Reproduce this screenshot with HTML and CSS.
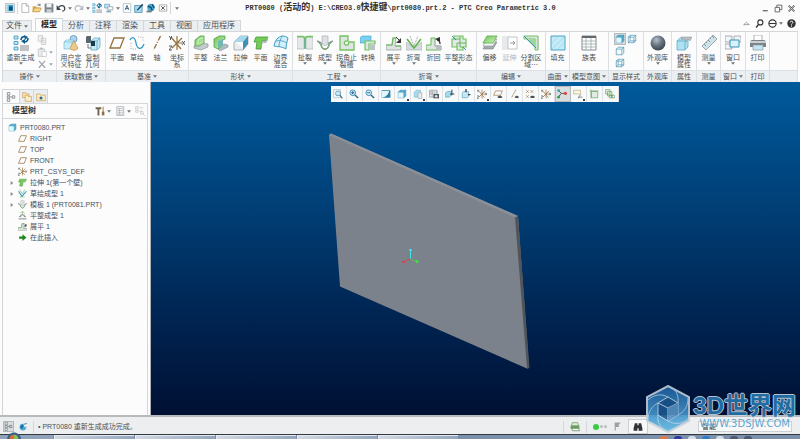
FILE: index.html
```html
<!DOCTYPE html>
<html lang="zh-CN">
<head>
<meta charset="utf-8">
<title>PRT0080 - PTC Creo Parametric 3.0</title>
<link rel="stylesheet" href="styles.css">
</head>
<body>
<svg class="defs" aria-hidden="true">
  <defs>
    <linearGradient id="gGreen" x1="0" y1="0" x2="1" y2="1"><stop offset="0" stop-color="#6cc455"/><stop offset="1" stop-color="#d4f2c4"/></linearGradient>
    <linearGradient id="gBlue" x1="0" y1="0" x2="1" y2="1"><stop offset="0" stop-color="#3f93b8"/><stop offset="1" stop-color="#d8f2fb"/></linearGradient>
    <radialGradient id="gBall" cx=".4" cy=".3" r=".7"><stop offset="0" stop-color="#b5c0cb"/><stop offset=".5" stop-color="#6b7885"/><stop offset="1" stop-color="#3c4650"/></radialGradient>
    <linearGradient id="gHex" x1="0" y1="0" x2="0" y2="1"><stop offset="0" stop-color="#1d5f9e"/><stop offset="1" stop-color="#5cb7e4"/></linearGradient>
  </defs>
  <symbol id="app" viewBox="0 0 16 16"><path d="M1 1h14v14H1z" fill="#f2f6f8" stroke="#8b969f"/><path d="M3 3h10v10H3z" fill="#2f94c6"/><path d="M6 6h6v6H6z" fill="#0b4f80"/><path d="M3 3h3v10H3z" fill="#93d0ea"/></symbol>
  <symbol id="new" viewBox="0 0 16 16"><path d="M3 1h7l4 4v10H3z" fill="#fff" stroke="#8d959b"/><path d="M10 1v4h4" fill="#dfe5e9" stroke="#8d959b"/></symbol>
  <symbol id="open" viewBox="0 0 16 16"><path d="M1 5h5l1 2h5v7H1z" fill="#d9a94c"/><path d="M1 14l3-6h11l-3 6z" fill="#f6d78d" stroke="#b98a35"/><path d="M8 4c2-3 4-3 5 0m0 0V1m0 3h-3" fill="none" stroke="#555"/></symbol>
  <symbol id="save" viewBox="0 0 16 16"><path d="M1 1h14v14H1z" fill="#7d858b"/><path d="M4 1h8v6H4z" fill="#f2f4f5"/><path d="M4 10h8v5H4z" fill="#c9ced2"/></symbol>
  <symbol id="undo" viewBox="0 0 16 16"><path d="M4 7c4-5 10-3 10 2 0 2-2 4-4 4" fill="none" stroke="#3c4247" stroke-width="2"/><path d="M1 3v8h7z" fill="#3c4247"/></symbol>
  <symbol id="redo" viewBox="0 0 16 16"><path d="M12 7C8 2 2 4 2 9c0 2 2 4 4 4" fill="none" stroke="#b8bcc0" stroke-width="2"/><path d="M15 3v8H8z" fill="#b8bcc0"/></symbol>
  <symbol id="regen" viewBox="0 0 16 16"><path d="M1 1h4v3H1zM1 6.500h4v3H1zM1 12h4v3H1z" fill="#b9e4f5" stroke="#3d97bd" stroke-width=".8"/><path d="M7 11h9M7 13h9M7 15h9" stroke="#888"/><path d="M8 5c0-3 3-4 4-3M15 3c0 4-3 4-4 4" fill="none" stroke="#0c5c8c" stroke-width="1.600"/><path d="M11 0l4 2-3 3zM12 4v5L8 6z" fill="#0c5c8c"/></symbol>
  <symbol id="copy" viewBox="0 0 16 16"><path d="M2 1h7v9H2zM7 5h7v10H7z" fill="#f3f3f3" stroke="#b5b8ba"/><path d="M9 9h4M9 12h4" stroke="#c5c8ca"/></symbol>
  <symbol id="paste" viewBox="0 0 16 16"><path d="M2 3h10v12H2z" fill="#ececec" stroke="#b5b8ba"/><path d="M5 1h4v3H5z" fill="#b5b8ba"/><path d="M8 7h7v8H8z" fill="#fff" stroke="#b5b8ba"/></symbol>
  <symbol id="del" viewBox="0 0 16 16"><path d="M3 3l10 11M13 3L3 14" stroke="#a2a6a9" stroke-width="2"/></symbol>
  <symbol id="windows" viewBox="0 0 16 16"><path d="M1 2h8v6H1z" fill="#bfe4f4" stroke="#4694b8"/><path d="M6 6h8v5H6z" fill="#fff" stroke="#7b868d"/><path d="M4 12h7v3H4z" fill="#7fa8bd"/></symbol>
  <symbol id="pick" viewBox="0 0 16 16"><path d="M2 1h12v14H2z" fill="#fff" stroke="#a0a8ae"/><path d="M5 11l3-7 3 7M6 9h4" fill="none" stroke="#2f5f80" stroke-width="1.500"/></symbol>
  <symbol id="winedit" viewBox="0 0 16 16"><path d="M1 4h12v11H1z" fill="#a6dbf0" stroke="#27759c"/><path d="M4 11L13 1l2 2-9 9z" fill="#1f4b66"/></symbol>
  <symbol id="globe" viewBox="0 0 16 16"><circle cx="8" cy="7" r="6" fill="#4aa7d3"/><path d="M3 5l5 2 2 5M10 2l3 6" stroke="#0b4468" stroke-width="2" fill="none"/><path d="M1 12h8v3H1z" fill="#6f787f"/></symbol>
  <symbol id="closewin" viewBox="0 0 16 16"><path d="M2 3h12v10H2z" fill="#fff" stroke="#888"/><path d="M5 5l6 6M11 5l-6 6" stroke="#555" stroke-width="1.500"/></symbol>
  <symbol id="udf" viewBox="0 0 16 16"><circle cx="10.500" cy="4" r="3.500" fill="#b2d5ee" stroke="#4485b3" stroke-width=".7"/><path d="M1 7l2-2h8v7l-2 2H1z" fill="#c8eefa" stroke="#6fb2ce" stroke-width=".6"/><path d="M1 7h8v7M9 7l2-2" fill="none" stroke="#6fb2ce" stroke-width=".6"/><path d="M11 6l4 7c0 3-8 3-8 0z" fill="#ecc98c" stroke="#bb8b45" stroke-width=".6"/></symbol>
  <symbol id="copygeo" viewBox="0 0 16 16"><path d="M1 2l1-1h4v7H1z" fill="#5a656d"/><path d="M6 6l3-3h6v9l-3 3H6z" fill="#c4ecf8" stroke="#5ba2bd" stroke-width=".7"/><path d="M6 6h6v9M12 6l3-3" fill="none" stroke="#5ba2bd" stroke-width=".7"/><path d="M6 6h4v5H6z" fill="#1b3a4c"/><path d="M3 9v4h3" fill="none" stroke="#777"/></symbol>
  <symbol id="plane" viewBox="0 0 16 16"><path d="M5 3h10l-4 10H1z" fill="none" stroke="#96713f" stroke-width="1.300"/></symbol>
  <symbol id="sketch" viewBox="0 0 16 16"><path d="M1 5c2-4 5-3 6 3s5 8 8 1" fill="none" stroke="#2d9ac8" stroke-width="1.300"/><path d="M2 8v6h6M9 2h5v4" fill="none" stroke="#aaa" stroke-dasharray="1 1.500"/></symbol>
  <symbol id="axis" viewBox="0 0 16 16"><path d="M11.500 1L4.500 15" stroke="#96713f" stroke-width="1.400" stroke-dasharray="5 1.500 1 1.500"/></symbol>
  <symbol id="csys" viewBox="0 0 16 16"><path d="M8 8V1M8 8v7M8 8h5M2 2l10 12M13 3L3 13" stroke="#96713f" stroke-width="1.200"/><path d="M13 6l3 4M16 6l-3 4M0 1l1.500 2L3 1M1.500 3v2M0 11h3l-3 4h3" fill="none" stroke="#454545" stroke-width=".9"/></symbol>
  <symbol id="flat" viewBox="0 0 16 16"><path d="M1 11l6-3 8 1v3l-7 3-7-2z" fill="#c5cacd" stroke="#8c9499" stroke-width=".7"/><path d="M2 11V5l5-4h4v7l-5 3z" fill="url(#gGreen)" stroke="#4ca33e" stroke-width=".8"/><path d="M5 9V5l3-2h2" fill="none" stroke="#d6f3cf"/></symbol>
  <symbol id="flange" viewBox="0 0 16 16"><path d="M4 13l7-4 4 1v2l-8 4z" fill="#b4bbc0" stroke="#858d92" stroke-width=".6"/><path d="M1 12V4l5-3h6v3l-4 2v6l-3 2z" fill="url(#gGreen)" stroke="#4ca33e" stroke-width=".8"/><path d="M5 6l5-2v7l-5 2z" fill="#73b9b3"/></symbol>
  <symbol id="extrude" viewBox="0 0 16 16"><path d="M1 7l6-6h8v8l-5 6H1z" fill="#e9edef" stroke="#939b9f" stroke-width=".7"/><path d="M1 7l6-6h8l-5 6z" fill="#a7d7ea"/><path d="M10 7l5-6v8l-5 6z" fill="#3e92b6"/><path d="M3 7h7v6z" fill="#fff"/></symbol>
  <symbol id="planar" viewBox="0 0 16 16"><path d="M3 2h12l-2 4H9l-1 8H3l1-7H1z" fill="#75cc55" stroke="#3f9933" stroke-width=".8"/><path d="M9 6h4l2-4v3l-2 3H9.500L8 15H4v-1h4z" fill="#b6bbbe"/></symbol>
  <symbol id="blend" viewBox="0 0 16 16"><path d="M1 11C2 5 5 2 9 1c3 0 5 1 6 2-1 4-2 7-2 11-5-3-9-2-12-3z" fill="#d2effa" stroke="#3d9cc4"/><path d="M9 1C7 5 6 8 6 12M3 6c4-1 8 0 11 2" fill="none" stroke="#3d9cc4" stroke-width=".8"/></symbol>
  <symbol id="rip" viewBox="0 0 16 16"><path d="M0 2h7v12H0zM9 2h7v12H9z" fill="#e4e8e9" stroke="#a5abad" stroke-width=".6"/><path d="M0 1.500h6c2 0 2 2 2 12 0-10 0-12 2-12h6" fill="none" stroke="#6fc45e" stroke-width="1.400"/><path d="M8 4v10" stroke="#4ba2a0"/></symbol>
  <symbol id="form" viewBox="0 0 16 16"><path d="M5 1v8l3 2 3-2V1z" fill="#dce1e4" stroke="#9fa6aa" stroke-width=".6"/><path d="M0 6l4 2c0 8 8 8 8 0l4-2" fill="none" stroke="#8b9298" stroke-width="1.500"/><path d="M1 7l3 3c2 6 6 6 8 0l3-3" fill="none" stroke="#74b860"/></symbol>
  <symbol id="relief" viewBox="0 0 16 16"><path d="M1 1h8v5c-5-1-5 5 0 4l1-3h5v8H1z" fill="#dfe4e5" stroke="#70c45c" stroke-width="1.300"/></symbol>
  <symbol id="convert" viewBox="0 0 16 16"><path d="M0 3l2-2h9v7H0z" fill="#7ad0ee" stroke="#39a2c8" stroke-width=".6"/><path d="M5 6h10v3h-6v6H5z" fill="#dfe4e5" stroke="#70c45c" stroke-width="1.200"/><path d="M10 10h5v5h-5z" fill="#bac3c7"/></symbol>
  <symbol id="unbend" viewBox="0 0 16 16"><path d="M0 10h6l1-7h3l-1 8h6v4H0z" fill="#dfe3e4" stroke="#8f979b" stroke-width=".7"/><path d="M0 10h6l1-7h3M9 11h6" fill="none" stroke="#64bb55" stroke-width="1.200"/><path d="M10 2l4 4" stroke="#333"/><path d="M15 3v5h-5z" fill="#333"/></symbol>
  <symbol id="bend" viewBox="0 0 16 16"><path d="M0 15V7l8 6 8-6v8z" fill="#d6dbdd" stroke="#a0a7aa" stroke-width=".6"/><path d="M1 4l7 9 7-9" fill="none" stroke="#5eb34a" stroke-width="1.600"/><path d="M4 1l4 10 4-10" fill="none" stroke="#aab0b4" stroke-dasharray="2 1"/></symbol>
  <symbol id="bendback" viewBox="0 0 16 16"><path d="M0 10h5V3h4v8h6v4H0z" fill="#dfe3e4" stroke="#64bb55"/><path d="M10 10h5v5h-5z" fill="#b7bdc0"/><path d="M14 9c0-3-1-4-3-4" fill="none" stroke="#333" stroke-width="1.300"/><path d="M9 4l5-2v5z" fill="#333"/></symbol>
  <symbol id="flatform" viewBox="0 0 16 16"><path d="M3 1h9v3h3v8h-3v3H6v-3H1V4h2z" fill="#e2e7e7" stroke="#70c45c" stroke-width="1.200"/><path d="M3 4h6v8h3M6 12V8h9M9 1v3" fill="none" stroke="#65b954"/><path d="M1 1l4 4M15 15l-3-3" stroke="#3e96be"/></symbol>
  <symbol id="offset" viewBox="0 0 16 16"><path d="M5 7h10l-4 7H1z" fill="#a4abae" stroke="#7d8588" stroke-width=".6"/><path d="M5 4h10l-4 7H1z" fill="#f3f5f5" stroke="#8d9497" stroke-width=".6"/><path d="M5 1h10l-4 7H1z" fill="url(#gGreen)" stroke="#54ad42" stroke-width=".8"/></symbol>
  <symbol id="extend" viewBox="0 0 16 16"><path d="M0 1h6v14H0z" fill="#e7e9ea"/><path d="M6 2h9v12H6z" fill="#fff" stroke="#c0c5c8"/><path d="M8 8h5m-2-2l2 2-2 2" fill="none" stroke="#999"/></symbol>
  <symbol id="split" viewBox="0 0 16 16"><path d="M0 1h16v14h-3V5L8 5z" fill="#e2e6e6"/><path d="M1 1h14v14h-3V4H1z" fill="#dce1e2" stroke="#70c45c"/><path d="M4 5h8v8z" fill="#9ad8a0"/><path d="M1 1l12 12" stroke="#3e96be"/></symbol>
  <symbol id="fill" viewBox="0 0 16 16"><path d="M1 1h14v14H1z" fill="#c3ebf8" stroke="#48a3c6"/><path d="M2 8l6-6M2 14L14 2M8 14l6-6" stroke="#94d3e9" stroke-width=".7"/></symbol>
  <symbol id="table" viewBox="0 0 16 16"><path d="M1 1h14v14H1z" fill="#fff" stroke="#858d91"/><path d="M1 2h14" stroke="#61696e" stroke-width="2"/><path d="M1 6h14M1 9h14M1 12h14M5 3v12M10 3v12" stroke="#a0a7aa" stroke-width=".8"/></symbol>
  <symbol id="cubef" viewBox="0 0 16 16"><path d="M2 5l3-3h9v9l-3 3H2z" fill="#58b7db" stroke="#3389ad"/><path d="M2 5h9v9H2z" fill="#e5f7fd"/><path d="M2 5h9v9M11 5l3-3" fill="none" stroke="#3389ad"/></symbol>
  <symbol id="cubeh" viewBox="0 0 16 16"><path d="M2 5l3-3h9v9l-3 3H2zM2 5h9v9M11 5l3-3" fill="#f6fcfe" stroke="#3389ad"/></symbol>
  <symbol id="cubew" viewBox="0 0 16 16"><path d="M2 5l3-3h9v9l-3 3H2zM2 5h9v9M11 5l3-3M5 2v9h9M5 11l-3 3" fill="none" stroke="#3389ad"/></symbol>
  <symbol id="ball" viewBox="0 0 16 16"><circle cx="8" cy="8" r="7.500" fill="url(#gBall)"/></symbol>
  <symbol id="props" viewBox="0 0 16 16"><path d="M1 6l3-3h8v9l-3 3H1z" fill="#aee2f3" stroke="#4fa3c1" stroke-width=".7"/><path d="M1 6h8v9M9 6l3-3" fill="none" stroke="#4fa3c1" stroke-width=".7"/><path d="M5 2h11l-2 4-2-2-2 3-1-3-3 1z" fill="#b9bfc3" stroke="#8a9196" stroke-width=".5"/></symbol>
  <symbol id="ruler" viewBox="0 0 16 16"><path d="M1 11L12 0l4 4L5 15z" fill="#cfe2ea" stroke="#8a989f" stroke-width=".8"/><path d="M3 9l2 2M5 7l1 1M7 5l2 2M9 3l1 1M11 1l2 2" stroke="#677379" stroke-width=".7"/></symbol>
  <symbol id="wins" viewBox="0 0 16 16"><path d="M0 1h7v6H0zM9 1h7v6H9zM0 9h7v5H0z" fill="#f3f4f5" stroke="#969ea3" stroke-width=".8"/><path d="M5 5h9v7H5z" fill="#d8f1fa" stroke="#3a92b7"/></symbol>
  <symbol id="print" viewBox="0 0 16 16"><path d="M4 0h8v6H4z" fill="#fff" stroke="#9aa1a5" stroke-width=".8"/><path d="M0 6l2-1h12l2 1v6H0z" fill="#7b8389"/><path d="M0 6h16v2H0z" fill="#c9cfd3"/><path d="M3 10h10v5H3z" fill="#c1e7f4" stroke="#8c969b" stroke-width=".7"/></symbol>
  <symbol id="zoomfit" viewBox="0 0 16 16"><path d="M1 1h11v13H1z" fill="#f7fbfd" stroke="#9cb4c0"/><circle cx="8" cy="7" r="4" fill="#c9e9f6" stroke="#3f7894"/><path d="M11 10l4 5" stroke="#3f7894" stroke-width="2"/></symbol>
  <symbol id="zoomin" viewBox="0 0 16 16"><circle cx="6" cy="6" r="4.500" fill="#d6effa" stroke="#247fb0" stroke-width="1.300"/><path d="M9.500 9.500l5 5" stroke="#24658a" stroke-width="2.200"/><path d="M3.500 6h5M6 3.500v5" stroke="#114b6e" stroke-width="1.300"/></symbol>
  <symbol id="zoomout" viewBox="0 0 16 16"><circle cx="6" cy="6" r="4.500" fill="#d6effa" stroke="#247fb0" stroke-width="1.300"/><path d="M9.500 9.500l5 5" stroke="#24658a" stroke-width="2.200"/><path d="M3.500 6h5" stroke="#114b6e" stroke-width="1.300"/></symbol>
  <symbol id="repaint" viewBox="0 0 16 16"><path d="M1 2h14v12H1z" fill="#2b7ca2"/><path d="M1 3h12C12 9 7 13 1 14z" fill="#e0f5fc"/></symbol>
  <symbol id="views" viewBox="0 0 16 16"><path d="M2 5l3-3h7v8l-3 3H2z" fill="#a7dcf0" stroke="#62a4bf" stroke-width=".7"/><path d="M8 6h6v9H8z" fill="#e9ecee" stroke="#9aa2a6"/></symbol>
  <symbol id="viewmgr" viewBox="0 0 16 16"><path d="M1 2h12v11H1z" fill="#f1f3f4" stroke="#7a8186"/><path d="M1 5h12M5 2v11M1 8h12" stroke="#8e9599"/><path d="M7 8h9v7H7z" fill="#545c61"/><circle cx="11.500" cy="11.500" r="2" fill="#dfe5e8"/></symbol>
  <symbol id="spin" viewBox="0 0 16 16"><path d="M1 6l3-2h6v6l-3 3H1z" fill="#a7dcf0" stroke="#5d9fba"/><path d="M8 8h7M11 1v9" stroke="#353c41" stroke-width="1.500"/></symbol>
  <symbol id="pan" viewBox="0 0 16 16"><path d="M2 6l2-2h8v8l-2 2H2z" fill="#c4e9f6" stroke="#5d9fba"/><path d="M8 0v5M15 9h-4" stroke="#353c41" stroke-width="2"/></symbol>
  <symbol id="axd" viewBox="0 0 16 16"><path d="M11 1L4 14" stroke="#96713f" stroke-width="1.200" stroke-dasharray="4 1"/><path d="M9 13c2-3 5-3 7 0-2 2-5 2-7 0z" fill="#49535a"/></symbol>
  <symbol id="pld" viewBox="0 0 16 16"><path d="M4 3h11l-3 7H1z" fill="none" stroke="#96713f"/><path d="M7 13c2-3 6-3 8 0-2 2-6 2-8 0z" fill="#49535a"/></symbol>
  <symbol id="ptd" viewBox="0 0 16 16"><path d="M2 2l4 4m0-4L2 6M9 2l4 4m0-4L9 6M2 10l4 4m0-4l-4 4" stroke="#96713f"/><path d="M8 13c2-3 6-3 8 0-2 2-6 2-8 0z" fill="#49535a"/></symbol>
  <symbol id="tri" viewBox="0 0 16 16"><path d="M2 2l5 5-5 6M7 7h7" fill="none" stroke="#48545b" stroke-width="1.500"/><circle cx="2.500" cy="2.500" r="2" fill="#319fa0"/><circle cx="2.500" cy="13" r="2.200" fill="#2e9e4d"/><circle cx="13.500" cy="7" r="2.500" fill="#d9473b"/></symbol>
  <symbol id="note" viewBox="0 0 16 16"><path d="M1 2h11v6H1z" fill="#fbf4df" stroke="#b7a779"/><path d="M12 9l-3 4h6M9 13v2" fill="none" stroke="#454d52"/></symbol>
  <symbol id="sheet" viewBox="0 0 16 16"><path d="M4 4h10v10H4z" fill="#e4eae7" stroke="#5b9f55"/><path d="M1 3h14M3 1v14" stroke="#5b9f55"/></symbol>
  <symbol id="layers" viewBox="0 0 16 16"><path d="M1 1h7v7H1zM4 4h7v7H4z" fill="#e3efe2" stroke="#5b9f55"/><circle cx="9" cy="12" r="2.500" fill="none" stroke="#3b7b39"/><circle cx="13" cy="12" r="2.500" fill="none" stroke="#3b7b39"/></symbol>
  <symbol id="treei" viewBox="0 0 16 16"><path d="M2 1h4v4H2zM2 6.500h4v3H2zM2 11h4v4H2z" fill="#fff" stroke="#56606a"/><path d="M7 8h3M10 6h4v4h-4z" fill="none" stroke="#56606a"/></symbol>
  <symbol id="folders" viewBox="0 0 16 16"><path d="M1 1h5l1 2h4v6H1z" fill="#f8e3b4" stroke="#c79a4b"/><path d="M5 5h4l1 2h5v8H5z" fill="#fbecc8" stroke="#c79a4b"/></symbol>
  <symbol id="fav" viewBox="0 0 16 16"><path d="M1 3h5l1 2h8v9H1z" fill="#fbecc8" stroke="#c79a4b"/><circle cx="8" cy="9.500" r="2.500" fill="#2c6a8e"/></symbol>
  <symbol id="tools" viewBox="0 0 16 16"><path d="M1 2h9v3H1zM4 5h3v10H4z" fill="#6f6353"/><path d="M12 1h2v9h-2z" fill="#cc9145"/><path d="M11 9h4v6h-4z" fill="#8a7044"/></symbol>
  <symbol id="list" viewBox="0 0 16 16"><path d="M3 1h11v14H3z" fill="#fff" stroke="#8d959b"/><path d="M4 4h9M4 7h9M4 10h9M4 13h9M7 4v10" stroke="#9aa2a7"/></symbol>
  <symbol id="treeoff" viewBox="0 0 16 16"><path d="M1 1h4v4H1zM1 7h4v3H1zM7 3h6M7 8h4M9 9h4v4H9zM13 13l3 3" fill="none" stroke="#b7bcc0"/></symbol>
  <symbol id="insert" viewBox="0 0 16 16"><path d="M2 6h6V2l7 6-7 6v-4H2z" fill="#178a17"/></symbol>
  <symbol id="sform" viewBox="0 0 16 16"><path d="M1 4l6 9 8-9" fill="none" stroke="#3e96be" stroke-width="2"/><path d="M3 1l5 8 4-8M3 14h9" fill="none" stroke="#64a957"/></symbol>
  <symbol id="fform" viewBox="0 0 16 16"><path d="M2 10h3V7h6v3h3M1 14h14" fill="none" stroke="#686f74" stroke-width="1.400"/><path d="M4 4l4-3 4 3M8 1v5" fill="none" stroke="#68a95c"/></symbol>
  <symbol id="expander" viewBox="0 0 6 8"><path d="M1 1l4 3-4 3z" fill="#848b91"/></symbol>
  <symbol id="dd" viewBox="0 0 6 4"><path d="M0 0h6L3 4z" fill="#6f757a"/></symbol>
  <symbol id="min" viewBox="0 0 16 16"><path d="M3 11h9v2H3z" fill="#555"/></symbol>
  <symbol id="restore" viewBox="0 0 16 16"><path d="M5 6V2h9v8h-4M2 6h8v8H2z" fill="none" stroke="#555" stroke-width="1.500"/></symbol>
  <symbol id="close" viewBox="0 0 16 16"><path d="M3 3l10 10M13 3L3 13" stroke="#555" stroke-width="3"/><path d="M3 3l10 10M13 3L3 13" stroke="#fff"/></symbol>
  <symbol id="up" viewBox="0 0 16 16"><path d="M3 10l5-4 5 4z" fill="#fff" stroke="#666"/></symbol>
  <symbol id="search" viewBox="0 0 16 16"><circle cx="9.500" cy="6" r="4.500" fill="none" stroke="#333" stroke-width="2"/><path d="M6 10l-4 5" stroke="#333" stroke-width="2.500"/></symbol>
  <symbol id="smile" viewBox="0 0 16 16"><circle cx="8" cy="8" r="6.500" fill="#fff" stroke="#333" stroke-width="2"/><path d="M2 7h12v2H2z" fill="#333"/></symbol>
  <symbol id="help" viewBox="0 0 16 16"><circle cx="8" cy="8" r="7.500" fill="#333"/><path d="M5.500 6c0-3 5-3 5 0 0 2-2.500 1.500-2.500 4M8 11.500v2" fill="none" stroke="#fff" stroke-width="1.700"/></symbol>
  <symbol id="flag" viewBox="0 0 16 16"><path d="M3 1h11l-4 4 1 4H5v6H3z" fill="#9aa1a6"/></symbol>
  <symbol id="bino" viewBox="0 0 16 16"><path d="M3 2h4v3h2V2h4l2 8v4H9v-4H7v4H1v-4z" fill="#2d3236"/></symbol>
  <symbol id="browser" viewBox="0 0 16 16"><circle cx="7" cy="9" r="6" fill="#4ba8d5"/><path d="M2 10c2-6 8-8 13-8-3 2-7 3-9 10" fill="#1c6d9d"/><path d="M7 4l6 1-2 5z" fill="#e9f6fb"/></symbol>
  <symbol id="gprint" viewBox="0 0 16 16"><path d="M4 1h8l2 5H2z" fill="#d9efd2" stroke="#5c8d52"/><path d="M1 6h14v5H1z" fill="#6e9a64"/><path d="M3 10h11l1 4H4z" fill="#eef8e9" stroke="#4e7d46"/></symbol>
</svg>

<header class="top">
  <div class="titlebar">
    <div class="quick">
      <svg class="i10"><use href="#app"/></svg><span class="bar"></span>
      <button aria-label="新建"><svg class="i10"><use href="#new"/></svg></button>
      <button aria-label="打开"><svg class="i10"><use href="#open"/></svg></button>
      <button aria-label="保存"><svg class="i10"><use href="#save"/></svg></button>
      <button aria-label="撤消"><svg class="i10"><use href="#undo"/></svg><svg class="dd"><use href="#dd"/></svg></button>
      <button aria-label="重做"><svg class="i10"><use href="#redo"/></svg><svg class="dd"><use href="#dd"/></svg></button>
      <button aria-label="重新生成"><svg class="i10"><use href="#regen"/></svg></button>
      <button aria-label="窗口"><svg class="i10"><use href="#windows"/></svg><svg class="dd"><use href="#dd"/></svg></button>
      <button aria-label="选择"><svg class="i10"><use href="#pick"/></svg></button>
      <button aria-label="激活"><svg class="i10"><use href="#winedit"/></svg></button>
      <button aria-label="浏览"><svg class="i10"><use href="#globe"/></svg></button>
      <button aria-label="关闭窗口"><svg class="i10"><use href="#closewin"/></svg></button>
      <span class="bar"></span><button aria-label="自定义"><svg class="dd"><use href="#dd"/></svg></button>
    </div>
    <h1>PRT0080 (<span>活动的</span>) E:\CREO3.0<span>快捷键</span>\prt0080.prt.2 - PTC Creo Parametric 3.0</h1>
    <div class="winctl">
      <button aria-label="最小化"><svg class="i8"><use href="#min"/></svg></button>
      <button aria-label="还原"><svg class="i8"><use href="#restore"/></svg></button>
      <button aria-label="关闭"><svg class="i8"><use href="#close"/></svg></button>
    </div>
  </div>
  <div class="tabrow">
    <nav class="tabs">
      <button class="file">文件<svg class="dd"><use href="#dd"/></svg></button>
      <button class="active">模型</button><button>分析</button><button>注释</button><button>渲染</button><button>工具</button><button>视图</button><button>应用程序</button>
    </nav>
    <div class="helpers">
      <button aria-label="最小化功能区"><svg class="i8"><use href="#up"/></svg></button>
      <button aria-label="搜索"><svg class="i8"><use href="#search"/></svg></button>
      <button aria-label="社区"><svg class="i8"><use href="#smile"/></svg><svg class="dd"><use href="#dd"/></svg></button>
      <button aria-label="帮助"><svg class="i8"><use href="#help"/></svg></button>
    </div>
  </div>
</header>

<section class="ribbon">
  <div class="group"><div class="tools">
    <button><svg class="i16"><use href="#regen"/></svg>重新生成<svg class="dd"><use href="#dd"/></svg></button>
    <div class="minis">
      <button aria-label="复制"><svg class="i10"><use href="#copy"/></svg></button>
      <button aria-label="粘贴"><svg class="i10"><use href="#paste"/></svg><svg class="dd"><use href="#dd"/></svg></button>
      <button aria-label="删除"><svg class="i10"><use href="#del"/></svg><svg class="dd"><use href="#dd"/></svg></button>
    </div></div><footer>操作<svg class="dd"><use href="#dd"/></svg></footer></div>
  <div class="group"><div class="tools">
    <button><svg class="i16"><use href="#udf"/></svg>用户定<br>义特征</button>
    <button><svg class="i16"><use href="#copygeo"/></svg>复制<br>几何</button></div><footer>获取数据<svg class="dd"><use href="#dd"/></svg></footer></div>
  <div class="group"><div class="tools">
    <button><svg class="i16"><use href="#plane"/></svg>平面</button>
    <button><svg class="i16"><use href="#sketch"/></svg>草绘</button>
    <button><svg class="i16"><use href="#axis"/></svg>轴</button>
    <button><svg class="i16"><use href="#csys"/></svg>坐标<br>系</button></div><footer>基准<svg class="dd"><use href="#dd"/></svg></footer></div>
  <div class="group"><div class="tools">
    <button><svg class="i16"><use href="#flat"/></svg>平整</button>
    <button><svg class="i16"><use href="#flange"/></svg>法兰</button>
    <button><svg class="i16"><use href="#extrude"/></svg>拉伸</button>
    <button><svg class="i16"><use href="#planar"/></svg>平面</button>
    <button><svg class="i16"><use href="#blend"/></svg>边界<br>混合</button></div><footer>形状<svg class="dd"><use href="#dd"/></svg></footer></div>
  <div class="group"><div class="tools">
    <button><svg class="i16"><use href="#rip"/></svg>扯裂<svg class="dd"><use href="#dd"/></svg></button>
    <button><svg class="i16"><use href="#form"/></svg>成型<svg class="dd"><use href="#dd"/></svg></button>
    <button><svg class="i16"><use href="#relief"/></svg>拐角止<br>裂槽</button>
    <button><svg class="i16"><use href="#convert"/></svg>转换</button></div><footer>工程<svg class="dd"><use href="#dd"/></svg></footer></div>
  <div class="group"><div class="tools">
    <button><svg class="i16"><use href="#unbend"/></svg>展平<svg class="dd"><use href="#dd"/></svg></button>
    <button><svg class="i16"><use href="#bend"/></svg>折弯<svg class="dd"><use href="#dd"/></svg></button>
    <button><svg class="i16"><use href="#bendback"/></svg>折回</button>
    <button><svg class="i16"><use href="#flatform"/></svg>平整形态<svg class="dd"><use href="#dd"/></svg></button></div><footer>折弯<svg class="dd"><use href="#dd"/></svg></footer></div>
  <div class="group"><div class="tools">
    <button><svg class="i16"><use href="#offset"/></svg>偏移</button>
    <button disabled><svg class="i16"><use href="#extend"/></svg>延伸</button>
    <button><svg class="i16"><use href="#split"/></svg>分割区<br>域⋯</button></div><footer>编辑<svg class="dd"><use href="#dd"/></svg></footer></div>
  <div class="group"><div class="tools">
    <button><svg class="i16"><use href="#fill"/></svg>填充</button></div><footer>曲面<svg class="dd"><use href="#dd"/></svg></footer></div>
  <div class="group"><div class="tools">
    <button><svg class="i16"><use href="#table"/></svg>族表</button></div><footer>模型意图<svg class="dd"><use href="#dd"/></svg></footer></div>
  <div class="group"><div class="styles">
    <button class="on" aria-label="着色"><svg class="i10"><use href="#cubef"/></svg></button>
    <button aria-label="线框"><svg class="i10"><use href="#cubew"/></svg></button>
    <button aria-label="消隐"><svg class="i10"><use href="#cubeh"/></svg></button><span></span>
    <button aria-label="隐藏线"><svg class="i10"><use href="#cubew"/></svg></button></div><footer>显示样式</footer></div>
  <div class="group"><div class="tools">
    <button><svg class="i16"><use href="#ball"/></svg>外观库<svg class="dd"><use href="#dd"/></svg></button></div><footer>外观库</footer></div>
  <div class="group"><div class="tools">
    <button><svg class="i16"><use href="#props"/></svg>模型<br>属性</button></div><footer>属性</footer></div>
  <div class="group"><div class="tools">
    <button><svg class="i16"><use href="#ruler"/></svg>测量<svg class="dd"><use href="#dd"/></svg></button></div><footer>测量</footer></div>
  <div class="group"><div class="tools">
    <button><svg class="i16"><use href="#wins"/></svg>窗口<svg class="dd"><use href="#dd"/></svg></button></div><footer>窗口<svg class="dd"><use href="#dd"/></svg></footer></div>
  <div class="group"><div class="tools">
    <button><svg class="i16"><use href="#print"/></svg>打印</button></div><footer>打印</footer></div>
  <div class="group"><div class="tools"></div><footer></footer></div>
</section>

<main class="work">
  <aside class="side">
    <div class="sidetabs">
      <button class="active" aria-label="模型树"><svg class="i10"><use href="#treei"/></svg></button>
      <button aria-label="文件夹浏览器"><svg class="i10"><use href="#folders"/></svg></button>
      <button aria-label="收藏夹"><svg class="i10"><use href="#fav"/></svg></button>
    </div>
    <div class="panel">
      <div class="panelhead"><h2>模型树</h2>
        <button aria-label="设置"><svg class="i10"><use href="#tools"/></svg><svg class="dd"><use href="#dd"/></svg></button>
        <button aria-label="显示"><svg class="i10"><use href="#list"/></svg><svg class="dd"><use href="#dd"/></svg></button>
        <button aria-label="过滤"><svg class="i10"><use href="#treeoff"/></svg></button>
      </div>
      <ul class="tree">
        <li class="root"><svg class="i8"><use href="#cubef"/></svg>PRT0080.PRT</li>
        <li><i></i><svg class="i8"><use href="#plane"/></svg>RIGHT</li>
        <li><i></i><svg class="i8"><use href="#plane"/></svg>TOP</li>
        <li><i></i><svg class="i8"><use href="#plane"/></svg>FRONT</li>
        <li><i></i><svg class="i8"><use href="#csys"/></svg>PRT_CSYS_DEF</li>
        <li><i><svg class="exp"><use href="#expander"/></svg></i><svg class="i8"><use href="#planar"/></svg>拉伸 1(第一个壁)</li>
        <li><i><svg class="exp"><use href="#expander"/></svg></i><svg class="i8"><use href="#sform"/></svg>草绘成型 1</li>
        <li><i><svg class="exp"><use href="#expander"/></svg></i><svg class="i8"><use href="#form"/></svg>模板 1 (PRT0081.PRT)</li>
        <li><i></i><svg class="i8"><use href="#fform"/></svg>平整成型 1</li>
        <li><i></i><svg class="i8"><use href="#unbend"/></svg>展平 1</li>
        <li><i></i><svg class="i8"><use href="#insert"/></svg>在此插入</li>
      </ul>
    </div>
  </aside>
  <section class="view">
    <svg class="scene" viewBox="151 82 649 333" role="img" aria-label="PRT0080">
      <path d="M329 135l2-1.500 187 82.500 11 152-2 .5-187-82z" fill="#7c828c"/>
      <path d="M329 135l2-1.500 187 82.500-3 1.500z" fill="#8a8f98"/>
      <path d="M515 217.500l3-1.500 11.500 152-2.500 .5z" fill="#50555a"/>
      <path d="M410.500 259v-9" stroke="#3fe3ee"/><path d="M410.500 259l-7 3" stroke="#cf4a50"/><path d="M410.500 259l6.500 2.500" stroke="#55c255"/>
      <path d="M409.500 249h2v2h-2z" fill="#3ff0ff"/><circle cx="403.500" cy="262" r="1.300" fill="#e63e42"/><circle cx="417" cy="261.500" r="1.500" fill="#36e83c"/>
    </svg>
    <div class="viewbar">
      <button aria-label="重新调整"><svg class="i10"><use href="#zoomfit"/></svg></button>
      <button aria-label="放大"><svg class="i10"><use href="#zoomin"/></svg></button>
      <button aria-label="缩小"><svg class="i10"><use href="#zoomout"/></svg></button>
      <button aria-label="重画"><svg class="i10"><use href="#repaint"/></svg></button>
      <button class="more" aria-label="显示样式"><svg class="i10"><use href="#cubef"/></svg></button>
      <button class="more" aria-label="已保存方向"><svg class="i10"><use href="#views"/></svg></button>
      <button aria-label="视图管理器"><svg class="i10"><use href="#viewmgr"/></svg></button>
      <button aria-label="旋转"><svg class="i10"><use href="#spin"/></svg></button>
      <button aria-label="平移"><svg class="i10"><use href="#pan"/></svg></button>
      <button class="more" aria-label="基准显示"><svg class="i10"><use href="#csys"/></svg></button>
      <button aria-label="平面显示"><svg class="i10"><use href="#pld"/></svg></button>
      <button aria-label="轴显示"><svg class="i10"><use href="#axd"/></svg></button>
      <button aria-label="点显示"><svg class="i10"><use href="#ptd"/></svg></button>
      <button aria-label="坐标系显示"><svg class="i10"><use href="#csys"/></svg></button>
      <button class="on" aria-label="旋转中心"><svg class="i10"><use href="#tri"/></svg></button>
      <button class="more" aria-label="注释显示"><svg class="i10"><use href="#note"/></svg></button>
      <button aria-label="钣金"><svg class="i10"><use href="#sheet"/></svg></button>
      <button aria-label="图层"><svg class="i10"><use href="#layers"/></svg></button>
    </div>
  </section>
</main>

<footer class="status">
  <button class="on" aria-label="导航器"><svg class="i8"><use href="#treei"/></svg></button>
  <button aria-label="浏览器"><svg class="i8"><use href="#browser"/></svg></button>
  <span class="bar"></span>
  <p><b>•</b> PRT0080 重新生成成功完成。</p>
  <div class="statend">
    <span class="bar"></span><svg class="i10"><use href="#gprint"/></svg>
    <span class="bar"></span><div class="dots"><i></i><i></i><i></i></div>
    <svg class="i8"><use href="#flag"/></svg>
    <button class="find" aria-label="查找"><svg class="i10"><use href="#bino"/></svg></button>
    <select aria-label="过滤器"><option>智能</option></select>
  </div>
</footer>
<div class="taskbar">
  <svg class="orb" viewBox="0 0 16 8"><path d="M0 8C1-2 15-2 16 8z" fill="#3c628c"/><path d="M3 8c0-4 2-5 5-5v5z" fill="#df6b37"/><path d="M8 3c3 0 5 2 5 5H8z" fill="#8cc152"/></svg>
  <span class="pad"></span><span class="task"></span><span class="task"></span><span class="task"></span><span class="task"></span><span class="task"></span>
  <div class="tray"><i class="orange"></i><i class="navy"></i><i class="pale"></i><i class="blue"></i><i class="pale"></i><i class="dark"></i><i class="dark"></i></div>
</div>

<div class="mark">
  <svg viewBox="0 0 46 48"><path d="M23 1l21 11v24L23 47 2 36V12z" fill="url(#gHex)" stroke="#c3ced9" stroke-width="2"/><path d="M23 12l10 6v12l-10 6-10-6V18z" fill="#195790" stroke="#bfd6ea"/><path d="M13 18l10 5 10-5M23 23v13" fill="none" stroke="#bfd6ea"/><path d="M23 23l10-5v12l-10 6z" fill="#5792c4"/><path d="M23 12C15 8 9 10 3 15M33 18c1-8-2-13-8-16M33 30c6-3 10-8 10-17M23 36c7 4 14 3 20-2M13 30c-1 7 2 13 9 16M13 18C7 21 3 27 3 35" fill="none" stroke="#a9cbe5"/></svg>
  <div><strong>3D世界网</strong><small>WWW.3DSJW.COM</small></div>
</div>
</body>
</html>
```
FILE: styles.css
```css
* { box-sizing: border-box; }

body {
  display: flex;
  flex-direction: column;
  height: 100vh;
  margin: 0;
  overflow: hidden;
  background: #fcfcfc;
  color: #4a4e52;
  font: 7px/8px "Liberation Sans", "Noto Sans CJK SC", sans-serif;
}

button {
  display: flex;
  align-items: center;
  margin: 0;
  padding: 0;
  border: 0;
  background: none;
  color: inherit;
  font: inherit;
}

h1, h2, p, ul { margin: 0; padding: 0; }

svg { display: block; flex: none; }
.defs { position: absolute; width: 0; height: 0; }
.i16 { width: 16px; height: 16px; }
.i10 { width: 10px; height: 10px; }
.i8 { width: 9px; height: 9px; }
.dd { width: 4px; height: 3px; margin-left: 2px; }
.exp { width: 4px; height: 6px; }
.bar { width: 1px; height: 12px; background: #d5d8da; }

/* Title bar */
.titlebar {
  display: grid;
  grid-template-columns: 1fr auto 1fr;
  align-items: center;
  height: 16px;
  padding: 0 4px 0 5px;
}
.quick { display: flex; align-items: center; gap: 2px; }
.quick button { min-width: 10px; }
.titlebar h1 {
  color: #333;
  font: bold 7px/12px "Liberation Mono", "Noto Sans CJK SC", monospace;
  white-space: pre;
}
.titlebar h1 span { font-size: 9px; }
.winctl, .helpers { display: flex; justify-content: flex-end; gap: 4px; }

/* Menu tabs */
.tabrow { display: flex; align-items: flex-end; justify-content: space-between; height: 15px; padding: 0 4px 0 2px; }
.tabs { display: flex; align-items: flex-end; }
.tabs button {
  height: 11px;
  padding: 0 5px;
  border: 1px solid #d3d7da;
  border-width: 1px 1px 0 0;
  background: #eceff1;
  font-size: 8px;
  line-height: 10px;
}
.tabs .file { margin-right: 3px; border-left-width: 1px; padding: 0 3px; }
.tabs .active { height: 13px; background: #fcfcfc; border-left-width: 1px; color: #222; font-weight: bold; }
.helpers { align-items: center; height: 16px; }

/* Ribbon */
.ribbon {
  display: grid;
  grid-template-columns: 54fr 49fr 83fr 104fr 88fr 96fr 69fr 24fr 39fr 35fr 28fr 25fr 24fr 25fr 24fr 28fr;
  height: 51px;
  margin: 0 2px;
  border: 1px solid #d3d7da;
  border-width: 1px 0 0 1px;
}
.group { display: flex; flex-direction: column; min-width: 0; border-right: 1px solid #dde0e2; }
.group footer {
  display: flex;
  align-items: center;
  justify-content: center;
  height: 12px;
  border-top: 1px solid #dde0e2;
  background: #eceff1;
  white-space: nowrap;
}
.tools { display: flex; flex: 1; justify-content: center; padding-top: 3px; }
.tools button {
  flex-direction: column;
  align-items: center;
  min-width: 20px;
  padding: 0 1px;
  line-height: 7px;
  white-space: nowrap;
}
.tools .i16 { margin-bottom: 3px; }
.tools > button .dd { margin: 1px 0 0; }
.tools button:disabled { color: #b4b7ba; }
.tools .minis { display: flex; flex-direction: column; gap: 2px; }
.minis button { flex-direction: row; min-width: 16px; }
.minis .dd { opacity: .6; }
.styles {
  display: grid;
  flex: 1;
  grid-template-columns: 12px 12px;
  align-content: center;
  justify-content: center;
}
.styles button { justify-content: center; height: 12px; }
.on { background: #d8dde0; outline: 1px solid #b5babd; outline-offset: -1px; }

/* Work area */
.work { display: flex; flex: 1; min-height: 0; }
.side { display: flex; flex-direction: column; width: 151px; padding: 7px 2px 0; border-right: 1px solid #aab0b4; }
.sidetabs { display: flex; height: 14px; }
.sidetabs button {
  justify-content: center;
  width: 14px;
  border: 1px solid #d3d7da;
  border-width: 1px 1px 0 0;
  background: #eceff1;
}
.sidetabs .active { width: 18px; border-left-width: 1px; background: #fcfcfc; }
.panel { flex: 1; border: 1px solid #d3d7da; border-width: 1px 1px 0; }
.panelhead { display: flex; align-items: center; gap: 4px; height: 15px; padding: 0 2px 0 9px; border-bottom: 1px solid #d3d7da; }
.panelhead h2 { flex: 1; color: #333; font-size: 8px; line-height: 10px; }
.tree { padding: 3px 0; list-style: none; color: #44505f; }
.tree li { display: flex; align-items: center; gap: 4px; height: 11px; padding-left: 7px; white-space: nowrap; }
.tree li.root { gap: 3px; padding-left: 5px; }
.tree i { width: 4px; }
.tree i + svg { margin-right: -1px; }

.view { position: relative; flex: 1; min-width: 0; background: linear-gradient(#005a9c, #004179 35%, #002350 72%, #001033); }
.scene { width: 100%; height: 100%; }
.viewbar {
  position: absolute;
  top: 4px;
  left: 50%;
  display: flex;
  height: 16px;
  margin-left: -145px;
  background: #f8f9fa;
}
.viewbar button { position: relative; justify-content: center; width: 16px; border-right: 1px solid #dfe2e4; }
.viewbar .more::after { position: absolute; right: 1px; bottom: 1px; width: 2px; height: 2px; background: #444; content: ""; }

/* Status bar */
.status {
  display: flex;
  align-items: center;
  gap: 4px;
  height: 19px;
  padding: 2px 8px 0 3px;
  border-top: 2px solid #b7babd;
  background: #eceef0;
}
.status > button { justify-content: center; width: 11px; height: 11px; }
.status p { flex: 1; color: #4c5055; }
.status b { color: #19678f; }
.statend { display: flex; align-items: center; gap: 6px; }
.dots { display: flex; align-items: center; gap: 1px; }
.dots i { width: 3px; height: 3px; border-radius: 50%; background: #b9bdc0; }
.dots i:first-child { width: 6px; height: 6px; background: #3bcb43; }
.find { justify-content: center; width: 20px; height: 15px; border: 1px solid #cdd0d2; background: #f8f8f8; }
.status select {
  width: 94px;
  height: 11px;
  margin-left: 44px;
  padding: 0 3px;
  border: 1px solid #cdd0d2;
  background: #f8f8f8;
  appearance: none;
  color: #333;
  font: inherit;
}

/* Taskbar */
.taskbar { position: relative; display: flex; gap: 1px; height: 5px; border-top: 1px solid #333a42; background: #7c90ac; }
.taskbar .pad { width: 53px; background: #91a3bb; }
.task { width: 80px; border: 1px solid #e3e9ef; border-width: 1px 0 0 1px; background: linear-gradient(100deg, #d2d9e2, #93a5bd); }
.orb { position: absolute; bottom: 0; left: 6px; width: 16px; height: 7px; }
.tray { display: flex; gap: 6px; margin: 1px 48px 0 auto; }
.tray i { width: 8px; border-radius: 4px 4px 0 0; }
.orange { background: #e0784a; }
.navy { background: #2a3b9c; }
.pale { background: #d5dde8; }
.blue { background: #2e7dca; }
.dark { background: #4b5a6e; }

/* Site mark laid over the lower right corner */
.mark { position: absolute; right: 4px; bottom: 6px; display: flex; align-items: flex-end; gap: 2px; opacity: .9; pointer-events: none; }
.mark svg { width: 46px; height: 48px; }
.mark div { display: flex; flex-direction: column; align-items: center; padding-bottom: 5px; }
.mark strong {
  color: #2375ae;
  font-size: 24px;
  line-height: 26px;
  text-shadow: 1px 0 #c9d5e0, -1px 0 #c9d5e0, 0 1px #c9d5e0, 0 -1px #c9d5e0;
}
.mark small { color: #4a9bc9; font: 10px/9px "DejaVu Sans", sans-serif; text-shadow: 0 0 1px #fff; }
```
